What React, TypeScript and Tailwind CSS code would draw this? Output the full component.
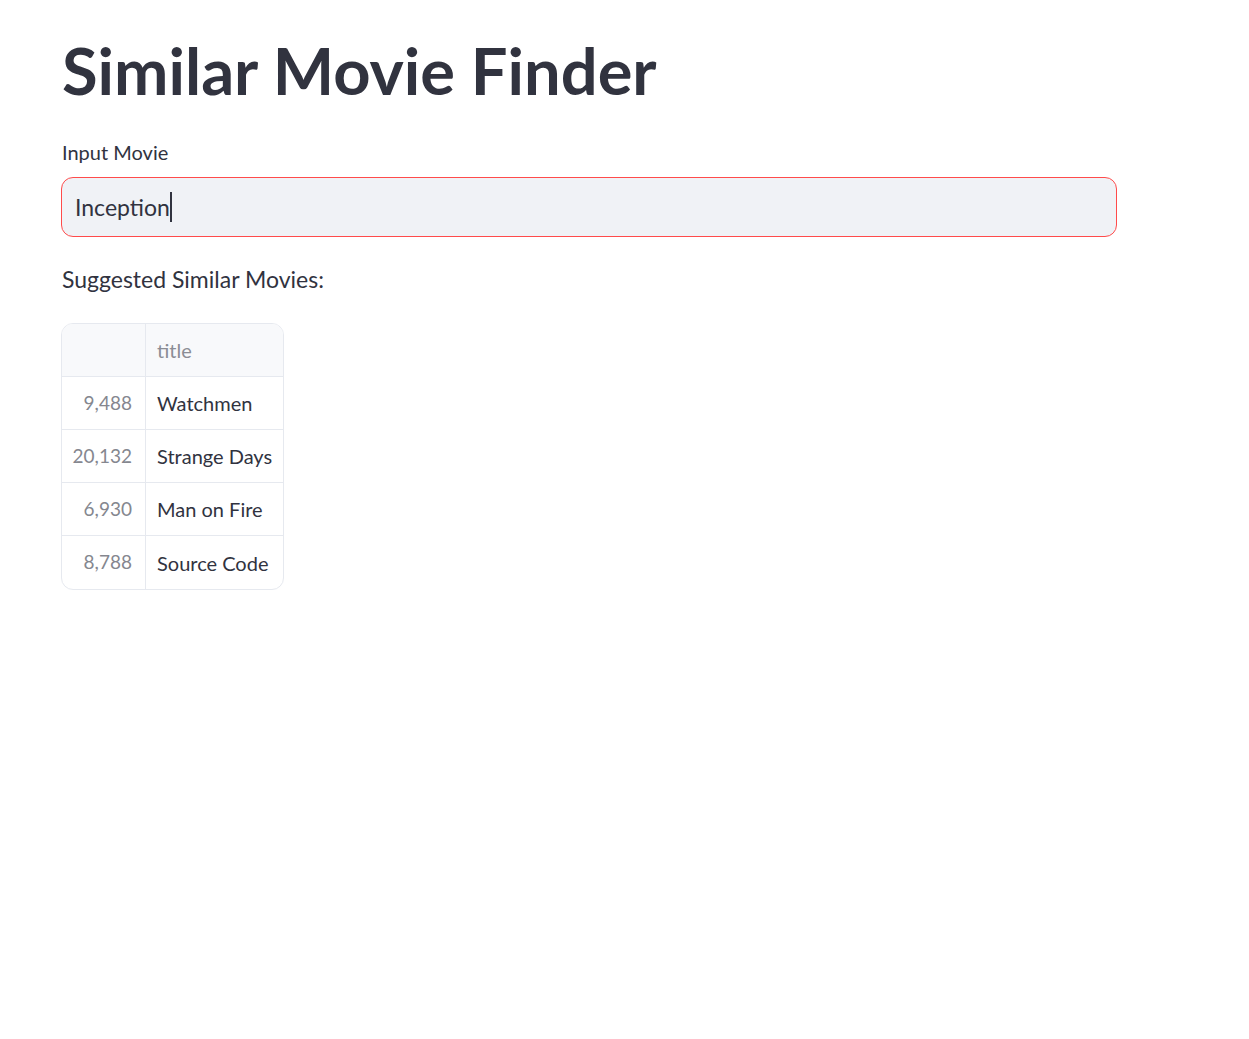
import React from "react";

const rows = [
  { idx: "9,488", title: "Watchmen" },
  { idx: "20,132", title: "Strange Days" },
  { idx: "6,930", title: "Man on Fire" },
  { idx: "8,788", title: "Source Code" },
];

export default function App() {
  return (
    <div
      className="min-h-[1039px] bg-white text-[#31333f]"
      style={{ fontFamily: "Lato, 'Noto Sans', sans-serif" }}
    >
      <div className="w-[1056px] ml-[61px] pt-[30px]">
        <h1 className="text-[65px] font-bold leading-[80px] ml-[1px]">
          Similar Movie Finder
        </h1>
        <div className="mt-[27px] text-[20px] leading-[30px] ml-[1px]">Input Movie</div>
        <div className="mt-[10px] h-[60px] rounded-[12px] border border-[#ff4b4b] bg-[#f0f2f6] flex items-center px-[13px]">
          <span className="text-[23px]">Inception</span>
          <span className="w-[2px] h-[30px] bg-[#31333f]" />
        </div>
        <div className="mt-[24px] text-[23px] leading-[36px] ml-[1px]">Suggested Similar Movies:</div>
        <div className="mt-[26px] w-[223px] rounded-[12px] border border-[#e6e9ef] overflow-hidden text-[20px]">
          <div className="flex h-[53px] bg-[#f8f9fb] border-b border-[#e6e9ef]">
            <div className="w-[84px] border-r border-[#e6e9ef]" />
            <div className="flex-1 flex items-center px-[11px] text-[#8b8d95]">title</div>
          </div>
          {rows.map((r, i) => (
            <div
              key={r.idx}
              className={`flex h-[53px] ${i < rows.length - 1 ? "border-b border-[#e6e9ef]" : ""}`}
            >
              <div className="w-[84px] border-r border-[#e6e9ef] flex items-center justify-end px-[13px] text-[19px] text-[#85878f]">
                {r.idx}
              </div>
              <div className="flex-1 flex items-center px-[11px] whitespace-nowrap">{r.title}</div>
            </div>
          ))}
        </div>
      </div>
    </div>
  );
}
